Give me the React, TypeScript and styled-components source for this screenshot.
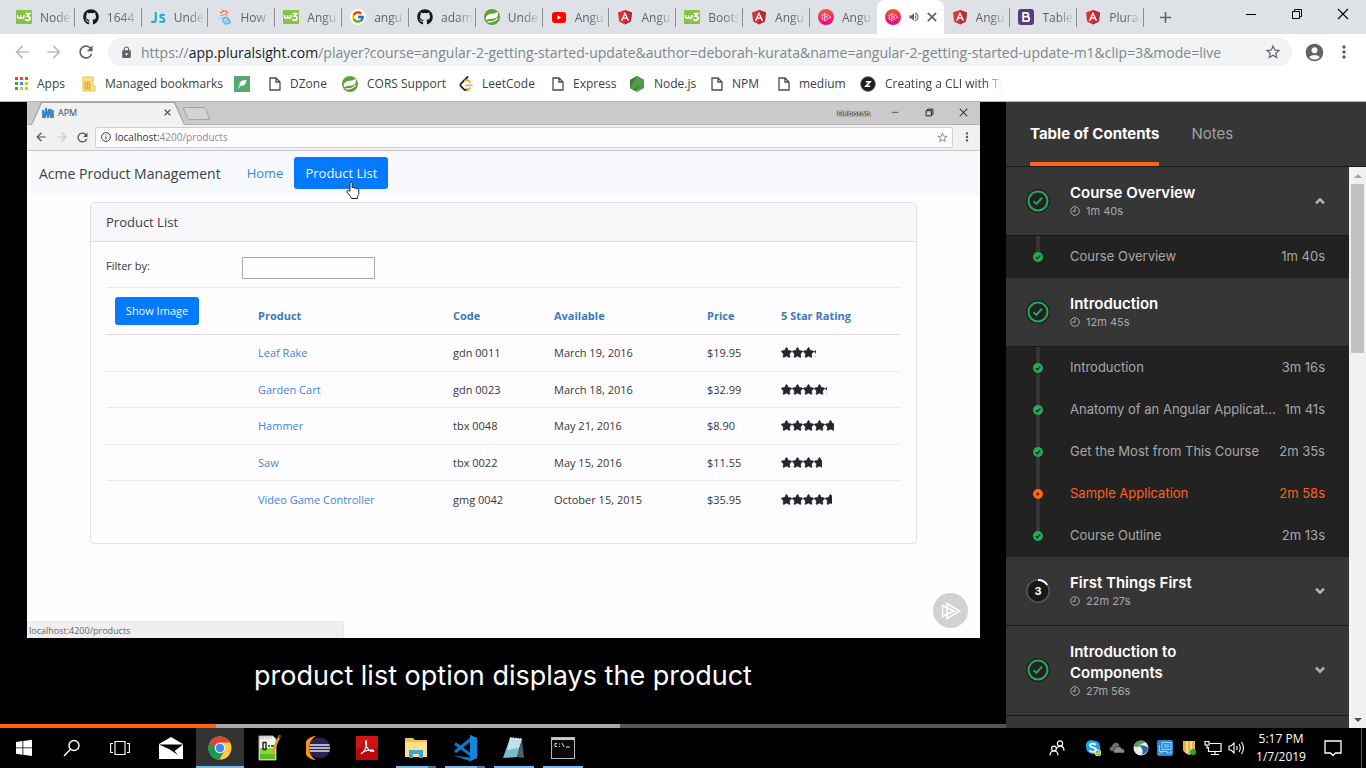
import React from 'react';
import styled, { createGlobalStyle, css } from 'styled-components';
import { FaGithub, FaStar, FaWindows } from 'react-icons/fa';
import { FcGoogle } from 'react-icons/fc';
import {
  MdAccountCircle,
  MdAdd,
  MdArrowBack,
  MdArrowForward,
  MdLock,
  MdMoreVert,
  MdRefresh,
  MdStarBorder,
  MdVolumeUp,
} from 'react-icons/md';

const UI = '"Open Sans", "Noto Sans", sans-serif';
const BRAND = 'Inter, "Open Sans", sans-serif';

const GlobalStyle = createGlobalStyle`
  *, *::before, *::after { box-sizing: border-box; }
  body { margin: 0; font-family: ${UI}; }
  button { margin: 0; padding: 0; border: 0; background: none; font: inherit; color: inherit; cursor: pointer; }
  a { color: inherit; text-decoration: none; }
  svg { display: block; flex: none; }
`;

const Desktop = styled.div`
  display: flex;
  flex-direction: column;
  height: 100vh;
  background: #000;
  overflow: hidden;
`;

/* ---------- Icons ---------- */

const W3Icon = () => (
  <svg width="16" height="16" viewBox="0 0 16 16">
    <rect y="1" width="16" height="14" rx="1" fill="#84c441" />
    <path d="M1.500 6v1.600a1.600 1.600 0 0 0 3.200 0V6.400M4.700 6.400v1.200a1.600 1.600 0 0 0 3.200 0V6" stroke="#fff" strokeWidth="1.500" fill="none" />
    <path d="M9.600 4.600h4l-2.200 2.600c3.600 0 3.200 4.200.2 4.200-1.200 0-1.900-.4-2.400-1.100" stroke="#fff" strokeWidth="1.800" fill="none" />
  </svg>
);

const JsIcon = () => (
  <svg width="16" height="16" viewBox="0 0 16 16" fill="none" stroke="#19a9c9" strokeWidth="2">
    <path d="M5.800 3v7.400q0 2.600-2.400 2.600-1.200 0-2.200-.6" />
    <path d="M14.800 6.300q-1.400-.6-2.600-.6-1.900 0-1.900 1.500 0 1 1.800 1.700 2.400.8 2.400 2.200 0 1.900-2.400 1.900-1.500 0-2.700-.6" />
  </svg>
);

const ClownIcon = () => (
  <svg width="16" height="16" viewBox="0 0 16 16">
    <path d="M1 10q2-3 5-3l5 1q4 2 4 7l-6 1q-3-1-4-4z" fill="#b9e0f5" />
    <path d="M6 9l4-2q4 2 5 7l-5 2q-4-3-4-7z" fill="#64b9e6" />
    <path d="M8 10l2 4M10 9l2 5" stroke="#d8effa" />
    <circle cx="8" cy="5.500" r="2.400" fill="#f9e3d8" />
    <path d="M4 3l2 1M6.500 1l1 2M10 1L9 3M12.500 3L10 4M5 6l1.500.5M9.500 6l1.500-.5M7.500 5.500h1" stroke="#e2543a" strokeWidth="1.300" />
  </svg>
);

const SpringIcon = () => (
  <svg width="16" height="16" viewBox="0 0 16 16">
    <circle cx="8" cy="8" r="8" fill="#5fa134" />
    <path d="M13.800 2.500c.8 4.500-1 7-4.800 7.300-2.500.2-5 .1-7 1.400C1 7.500 3.800 5 7.500 4.800c2.800-.2 4.800-.5 6.300-2.300z" fill="#fff" />
    <path d="M3.500 12.600c4.500.8 8-.4 10.200-3.600" fill="none" stroke="#fff" strokeWidth="1.300" />
  </svg>
);

const GoogleIcon = styled(FcGoogle).attrs({ size: 16 })`
  padding: 1px;
  border-radius: 50%;
  background: #fff;
`;

const YouTubeIcon = () => (
  <svg width="16" height="16" viewBox="0 0 16 16">
    <rect x="1" y="3" width="14" height="11" rx="3" fill="#f00" />
    <path d="M6.500 6.200v4.600l3.800-2.300z" fill="#fff" />
  </svg>
);

const AngularIcon = () => (
  <svg width="16" height="16" viewBox="0 0 16 16">
    <path d="M8 1l7 2.400-1.100 9L8 15.500l-5.900-3.100L1 3.400z" fill="#dd3139" />
    <path d="M8 1l7 2.400-1.100 9L8 15.500z" fill="#b52e31" />
    <path d="M8 2.800L3.800 11.800h1.600l.9-2h3.400l.9 2h1.600zm0 3l1.200 2.800H6.800z" fill="#fff" fillRule="evenodd" />
  </svg>
);

const PlayMark = ({ size, stroke, width = 1.2 }: { size: number; stroke: string; width?: number }) => (
  <svg width={size} height={size} viewBox="0 0 20 20" fill="none" stroke={stroke} strokeWidth={width}>
    <path d="M6 2.500L18.500 10 6 17.500z" />
    <path d="M1.500 4.500v11L13 10z" />
  </svg>
);

const PluralsightIcon = () => (
  <svg width="16" height="16" viewBox="0 0 16 16">
    <defs>
      <linearGradient id="ps" x1="0" y1="0" x2="0" y2="1">
        <stop offset="0" stopColor="#f15b2a" />
        <stop offset="1" stopColor="#ec008c" />
      </linearGradient>
    </defs>
    <circle cx="8" cy="8" r="8" fill="url(#ps)" />
    <path d="M6.500 4l6.500 4-6.500 4zM4.200 5.200v5.600L9.500 8z" fill="none" stroke="#ffc4dc" strokeWidth=".9" />
  </svg>
);

const BootstrapIcon = () => (
  <svg width="16" height="16" viewBox="0 0 16 16">
    <rect width="16" height="16" rx="3" fill="#563d7c" />
    <path d="M5.200 3.800h3.200c2.800 0 2.800 3.800 0 3.800H5.200zM5.200 7.600h3.600c3.200 0 3.200 4.600 0 4.600H5.200z" fill="none" stroke="#fff" strokeWidth="1.800" />
  </svg>
);

const AppsIcon = () => (
  <svg width="14" height="14" viewBox="0 0 14 14">
    {['#ea4335', '#ea4335', '#ea4335', '#34a853', '#4285f4', '#fbbc04', '#34a853', '#fbbc04', '#fbbc04'].map((c, i) => (
      <rect key={i} x={(i % 3) * 5 + 1} y={Math.floor(i / 3) * 5} width="3" height="3" fill={c} />
    ))}
  </svg>
);

const ManagedIcon = () => (
  <svg width="14" height="16" viewBox="0 0 14 16">
    <path d="M1 1h10v9h2v5H1z" fill="#fbe08a" stroke="#e8c14b" />
    <path d="M3 6h5v7H3zM3 8.500h5M3 11h5M5.500 6v7" fill="none" stroke="#d9a72c" />
  </svg>
);

const LeafIcon = () => (
  <svg width="16" height="16" viewBox="0 0 16 16">
    <rect width="16" height="16" fill="#53a970" />
    <path d="M12.500 4c-4 0-7 1.500-7 4 0 .8.200 1.400.6 1.900C9 10.200 12 9 12.500 4z" fill="#fff" />
    <path d="M4 12.500l3-4" stroke="#fff" strokeWidth="1" />
  </svg>
);

const PageIcon = () => (
  <svg width="12" height="14" viewBox="0 0 12 14" fill="none" stroke="#4a4d51" strokeWidth="1.300">
    <path d="M1 1h6l4 4v8H1zM7 1v4h4" />
  </svg>
);

const LeetCodeIcon = () => (
  <svg width="14" height="16" viewBox="0 0 14 16" fill="none" strokeWidth="1.800" strokeLinecap="round">
    <path d="M8.500 1L2 7.700q-1.200 1.300 0 2.600l3 3q1.500 1.500 3 0" stroke="#222" />
    <path d="M6 4.500q2-1.300 3.500.2l1.500 1.500M8 13.500q1 1.500 3-1.500" stroke="#f7a41d" />
    <path d="M7 9.300h6" stroke="#b3b3b3" />
  </svg>
);

const NodeIcon = () => (
  <svg width="16" height="16" viewBox="0 0 16 16">
    <path d="M8 0l7 4v8l-7 4-7-4V4z" fill="#4f9a4a" />
    <path d="M8 0l7 4-9 11-5-3V4z" fill="#3f7f3d" />
    <path d="M8 0l7 4v2L4 13.500 1 12z" fill="#66ad55" opacity=".6" />
  </svg>
);

const ZIcon = () => (
  <svg width="16" height="16" viewBox="0 0 16 16">
    <circle cx="8" cy="8" r="7.500" fill="#1e1e22" stroke="#8d8d8d" />
    <path d="M5.800 5.800h4.400l-4.400 4.400h4.400" fill="none" stroke="#fff" strokeWidth="1.500" />
  </svg>
);

const RestoreIcon = ({ size = 12 }: { size?: number }) => (
  <svg width={size} height={size} viewBox="0 0 12 12" fill="none" stroke="currentColor" strokeWidth={12 / size}>
    <path d="M1.500 3.500h7v7h-7zM3.500 3.500v-2h7v7h-2" />
  </svg>
);

const CrossIcon = ({ size = 12, weight = 1.1 }: { size?: number; weight?: number }) => (
  <svg width={size} height={size} viewBox="0 0 12 12" fill="none" stroke="currentColor" strokeWidth={weight}>
    <path d="M1 1l10 10M11 1L1 11" />
  </svg>
);

const DashIcon = ({ size = 12 }: { size?: number }) => (
  <svg width={size} height={size} viewBox="0 0 12 12" stroke="currentColor">
    <path d="M1 6.500h10" />
  </svg>
);

/* ---------- Browser chrome ---------- */

const TabStrip = styled.header`
  display: flex;
  flex: none;
  height: 34px;
  padding-left: 8px;
  background: #dee1e6;
`;

const TabList = styled.div`
  display: flex;
  flex: 0 1 1136px;
  min-width: 0;
`;

const Tab = styled.button<{ $active?: boolean; $beforeActive?: boolean }>`
  display: flex;
  flex: 1 1 0;
  align-items: center;
  min-width: 0;
  padding: 0 3px 0 8px;
  color: #5f6368;
  font-size: 12px;
  text-align: left;
  position: relative;
  ${(p) =>
    p.$active
      ? css`
          gap: 7px;
          background: #fff;
          border-radius: 8px 8px 0 0;
        `
      : css`
          gap: 8px;
          &::after {
            content: '';
            position: absolute;
            right: 0;
            top: 8px;
            width: 1px;
            height: 19px;
            background: ${p.$beforeActive ? 'transparent' : '#8b8e93'};
          }
        `}
`;

const TabTitle = styled.span`
  flex: 1;
  min-width: 0;
  overflow: hidden;
  white-space: nowrap;
  mask-image: linear-gradient(to right, #000 calc(100% - 16px), transparent);
`;

const NewTab = styled.button`
  display: grid;
  place-items: center;
  width: 42px;
  color: #5f6368;
`;

const WindowControls = styled.div`
  display: flex;
  height: 28px;
  margin-left: auto;
`;

const WindowButton = styled.button`
  display: grid;
  place-items: center;
  width: 46px;
  color: #000;
`;

const Toolbar = styled.div`
  display: flex;
  flex: none;
  align-items: center;
  height: 36px;
  padding: 0 6px;
  background: #fff;
`;

const ToolButton = styled.button<{ $dim?: boolean; $narrow?: boolean }>`
  display: grid;
  place-items: center;
  width: ${(p) => (p.$narrow ? '28px' : '32px')};
  height: 28px;
  color: ${(p) => (p.$dim ? '#babcbe' : '#5f6368')};
`;

const Omnibox = styled.form`
  display: flex;
  flex: 1;
  align-items: center;
  height: 28px;
  margin: 0 8px 0 6px;
  padding: 0 10px 0 12px;
  border-radius: 14px;
  background: #f1f3f4;
  color: #5f6368;
`;

const Url = styled.div`
  flex: 1;
  min-width: 0;
  margin-left: 8px;
  overflow: hidden;
  white-space: nowrap;
  font-size: 14px;
  color: #80868b;

  strong {
    color: #202124;
    font-weight: 400;
  }
`;

const Bookmarks = styled.nav`
  display: flex;
  flex: none;
  align-items: center;
  height: 32px;
  padding: 0 14px 4px;
  border-bottom: 1px solid #b6b4b6;
  background: #fff;
`;

const Bookmark = styled.a<{ $width: number; $fade?: boolean }>`
  display: flex;
  align-items: center;
  gap: 9px;
  width: ${(p) => p.$width}px;
  color: #3c4043;
  font-size: 12px;
  white-space: nowrap;
  ${(p) =>
    p.$fade &&
    css`
      overflow: hidden;
      mask-image: linear-gradient(to right, #000 calc(100% - 16px), transparent);
    `}
`;

/* ---------- Player ---------- */

const Main = styled.main`
  display: flex;
  flex: 1;
  min-height: 0;
`;

const Player = styled.section`
  display: flex;
  flex: 1;
  flex-direction: column;
  min-width: 0;
`;

const Video = styled.div`
  display: flex;
  flex-direction: column;
  flex: 1;
  min-height: 0;
  margin: 0 26px 0 27px;
  background: #fffdff;
  position: relative;
  overflow: hidden;
`;

const Caption = styled.p`
  flex: none;
  height: 86px;
  margin: 0;
  padding-top: 20px;
  color: #fff;
  font-family: ${BRAND};
  font-size: 27px;
  line-height: 36px;
  text-align: center;
`;

const Progress = styled.div`
  display: flex;
  flex: none;
  height: 4px;
  background: #555;
`;

const ProgressPart = styled.div<{ $kind: 'played' | 'buffered' }>`
  background: ${(p) => (p.$kind === 'played' ? '#ff6314' : '#a8a8a8')};
`;

const InnerStrip = styled.div`
  display: flex;
  flex: none;
  height: 23px;
  padding-left: 4px;
  border-bottom: 1px solid #b3b1b3;
  background: #cbc9cb;
`;

const InnerTab = styled.div`
  display: flex;
  align-items: center;
  width: 154px;
  height: 23px;
  padding: 0 14px 2px 11px;
  background: #a19fa1;
  clip-path: polygon(10px 0, 144px 0, 100% 100%, 0 100%);
  color: #444;
  font-size: 9px;
  position: relative;

  &::before {
    content: '';
    position: absolute;
    inset: 1px 1px 0;
    background: #f2f1f2;
    clip-path: polygon(10px 0, 142px 0, 100% 100%, 0 100%);
  }

  > * {
    position: relative;
  }

  button {
    margin-left: auto;
  }
`;

const InnerTabTitle = styled.span`
  margin-left: 4px;
`;

const InnerNewTab = styled.button`
  width: 23px;
  height: 13px;
  margin: 5px 0 0;
  border: 1px solid #a5a3a5;
  border-radius: 2px;
  background: #d4d2d4;
  transform: skewX(22deg);
`;

const InnerControls = styled.div`
  display: flex;
  align-items: center;
  margin-left: auto;
  padding-bottom: 2px;
  color: #222;

  button {
    display: grid;
    place-items: center;
    width: 34px;
    height: 20px;
  }
`;

const Owner = styled.span`
  margin-right: 8px;
  color: #f5f5f5;
  font-size: 8px;
  text-shadow: 0 0 1px #222, 0 0 1px #222, 1px 0 1px #444, -1px 0 1px #444;
`;

const InnerToolbar = styled.div`
  display: flex;
  flex: none;
  align-items: center;
  height: 26px;
  padding: 0 3px 1px;
  border-bottom: 1px solid #c9c2c7;
  background: #f2f1f2;
  color: #555;
`;

const InnerTool = styled.button<{ $dim?: boolean }>`
  display: grid;
  place-items: center;
  width: 21px;
  height: 20px;
  opacity: ${(p) => (p.$dim ? 0.25 : 1)};
`;

const InnerUrl = styled.div`
  display: flex;
  flex: 1;
  align-items: center;
  gap: 4px;
  height: 21px;
  margin: 0 3px 0 2px;
  padding: 0 3px 0 5px;
  border: 1px solid #cfcdcf;
  border-radius: 2px;
  background: #fffdff;
  color: #8b8b8b;
  font-size: 10px;

  b {
    color: #333;
    font-weight: 400;
  }

  span {
    flex: 1;
  }
`;

const AppNav = styled.nav`
  display: flex;
  flex: none;
  align-items: center;
  height: 44px;
  padding-left: 12px;
  background: #f7f9fd;
  color: #3c4046;
  font-size: 13px;
`;

const AppBrand = styled.a`
  margin-right: 15px;
  font-size: 14px;
`;

const AppLink = styled.a<{ $active?: boolean }>`
  display: flex;
  align-items: center;
  height: 32px;
  margin-bottom: 1px;
  padding: 0 11px;
  border-radius: 3px;
  background: ${(p) => (p.$active ? '#057aff' : 'transparent')};
  color: ${(p) => (p.$active ? '#f2f8ff' : '#3a85e0')};
  position: relative;
`;

const Pointer = styled.svg`
  position: absolute;
  left: 51px;
  top: 24px;
`;

const Card = styled.section`
  flex: none;
  margin: 7px 63px 0;
  border: 1px solid #e2e1e6;
  border-radius: 4px;
`;

const CardHeader = styled.h1`
  margin: 0;
  padding: 0 15px;
  border-bottom: 1px solid #dddce1;
  background: #f7f6f9;
  color: #3c4046;
  font-size: 13px;
  font-weight: 400;
  line-height: 38px;
`;

const CardBody = styled.div`
  padding: 15px 15px 26px;
  color: #33373c;
  font-size: 11px;
`;

const FilterRow = styled.div`
  display: grid;
  grid-template-columns: 136px 133px;
  align-items: center;
  margin-bottom: 8px;

  label {
    padding-bottom: 6px;
  }

  input {
    width: 100%;
    height: 22px;
    border: 1px solid #aaa9ad;
    background: #fffdff;
  }
`;

const Products = styled.table`
  width: 100%;
  height: 230px;
  border-collapse: separate;
  border-spacing: 0;
  table-layout: fixed;

  th,
  td {
    padding: 0 9px;
    border-top: 1px solid #e9ebef;
    text-align: left;
    white-space: nowrap;
  }

  thead tr {
    height: 47px;
  }

  th {
    padding: 9px;
    vertical-align: bottom;
    color: #3a7ab8;
    line-height: 18px;
  }

  th:first-child {
    padding-bottom: 0;
    vertical-align: top;
  }

  tbody tr:first-child td {
    border-top-color: #dddce2;
  }

  td a {
    color: #3a85e0;
  }
`;

const ShowImage = styled.button`
  display: block;
  width: 84px;
  height: 28px;
  border-radius: 3px;
  background: #057aff;
  color: #f2f8ff;
  font-weight: 400;
`;

const Stars = styled.div`
  display: flex;
  overflow: hidden;
  color: #24272c;

  path {
    stroke: currentColor;
    stroke-width: 36px;
  }
`;

const StatusBubble = styled.div`
  position: absolute;
  left: 0;
  bottom: 0;
  width: 317px;
  height: 17px;
  padding-left: 2px;
  border: 1px solid #e8e7e9;
  border-width: 1px 1px 0 0;
  border-radius: 0 3px 0 0;
  background: #efeff0;
  color: #666;
  font-size: 9px;
  line-height: 17px;
`;

const Watermark = styled.div`
  position: absolute;
  right: 12px;
  bottom: 10px;
  display: grid;
  place-items: center;
  width: 35px;
  height: 35px;
  border-radius: 50%;
  background: #d2d1d3;
`;

/* ---------- Course sidebar ---------- */

const Sidebar = styled.aside`
  display: flex;
  flex: none;
  flex-direction: column;
  width: 360px;
  background: #363636;
  font-family: ${BRAND};
`;

const SideTabs = styled.div`
  display: flex;
  flex: none;
  gap: 32px;
  height: 65px;
  padding: 0 24px;
  border-bottom: 1px solid #181818;
`;

const SideTab = styled.button<{ $active?: boolean }>`
  padding-top: 2px;
  border-bottom: 4px solid ${(p) => (p.$active ? '#ff6314' : 'transparent')};
  color: ${(p) => (p.$active ? '#fff' : '#a0a0a0')};
  font-size: 15px;
  font-weight: ${(p) => (p.$active ? 700 : 400)};
`;

const SideScroll = styled.div`
  display: flex;
  flex: 1;
  min-height: 0;
`;

const ModuleList = styled.div`
  flex: 1;
  min-width: 0;
  overflow: hidden;
`;

const ModuleHeader = styled.button`
  display: grid;
  grid-template-columns: 24px 1fr 10px;
  column-gap: 20px;
  align-items: center;
  width: 100%;
  padding: 15px 24px 16px 20px;
  border-bottom: 1px solid #181818;
  color: #fff;
  text-align: left;
`;

const ModuleText = styled.span`
  display: block;
  max-width: 160px;
`;

const ModuleTitle = styled.span`
  display: block;
  font-size: 15px;
  font-weight: 600;
  line-height: 21px;
`;

const ModuleMeta = styled.span`
  display: flex;
  align-items: center;
  gap: 6px;
  color: #aaa;
  font-size: 11px;
  line-height: 16px;
`;

const ClipList = styled.ul`
  margin: 0;
  padding: 0;
  list-style: none;
  background: #222;
`;

const Rail = styled.span<{ $last?: boolean }>`
  display: flex;
  align-items: center;
  justify-content: center;
  align-self: stretch;
  background: linear-gradient(#363636, #363636) center top / 4px ${(p) => (p.$last ? '50%' : '100%')} no-repeat;
`;

const Clip = styled.a<{ $current?: boolean }>`
  display: grid;
  grid-template-columns: 24px 1fr auto;
  align-items: center;
  height: 42px;
  padding: 0 24px 0 20px;
  color: ${(p) => (p.$current ? '#ff6314' : '#a8a8a8')};
  font-size: 13px;
  line-height: 18px;
  white-space: nowrap;
`;

const ClipTitle = styled.span`
  margin: 0 6px 0 20px;
  padding-bottom: 2px;
  overflow: hidden;
  text-overflow: ellipsis;
`;

const ClipTime = styled.span`
  padding-bottom: 2px;
`;

const ScrollTrack = styled.div`
  display: flex;
  flex-direction: column;
  align-items: center;
  justify-content: space-between;
  width: 17px;
  background: #f1f1f1;
`;

const ScrollArrow = styled.button<{ $down?: boolean }>`
  width: 17px;
  height: 17px;
  color: ${(p) => (p.$down ? '#505050' : '#a3a3a3')};
  display: grid;
  place-items: center;
`;

const ScrollThumb = styled.div`
  width: 13px;
  height: 169px;
  margin-bottom: auto;
  background: #c1c1c1;
`;

const DoneBadge = () => (
  <svg width="24" height="24" viewBox="0 0 24 24" fill="none">
    <circle cx="12" cy="12" r="12" fill="#222" />
    <circle cx="12" cy="12" r="9.500" stroke="#22ac58" strokeWidth="2" />
    <path d="M7.500 12.200l3 2.700 5.500-6.200" stroke="#22ac58" strokeWidth="2" />
  </svg>
);

const NumberBadge = () => (
  <svg width="24" height="24" viewBox="0 0 24 24" fill="none">
    <circle cx="12" cy="12" r="11.200" fill="#181818" stroke="#555" strokeWidth="1.600" />
    <path d="M12 1a11 11 0 0 1 9.200 5" stroke="#fff" strokeWidth="1.800" />
    <text x="12" y="16" textAnchor="middle" fill="#fff" fontSize="11" fontWeight="700">3</text>
  </svg>
);

const ClockIcon = () => (
  <svg width="10" height="10" viewBox="0 0 10 10" fill="none" stroke="#aaa">
    <circle cx="5" cy="5" r="4.300" />
    <path d="M5 2v3.300H2.500" />
  </svg>
);

const Chevron = ({ up }: { up?: boolean }) => (
  <svg width="10" height="8" viewBox="0 0 10 8" fill="none" stroke="#b0b0b0" strokeWidth="2.600">
    <path d={up ? 'M1 6.300l4-4 4 4' : 'M1 1.700l4 4 4-4'} />
  </svg>
);

const ClipDone = () => (
  <svg width="10" height="10" viewBox="0 0 10 10" fill="none">
    <circle cx="5" cy="5" r="5" fill="#22ac58" />
    <path d="M2.700 5.200l1.600 1.500 3-3.300" stroke="#222" strokeWidth="1.300" />
  </svg>
);

const ClipPlaying = () => (
  <svg width="10" height="10" viewBox="0 0 10 10">
    <circle cx="5" cy="5" r="5" fill="#ff6314" />
    <path d="M3.800 3v4l3-2z" fill="#222" />
  </svg>
);

/* ---------- Taskbar ---------- */

const Taskbar = styled.footer`
  display: flex;
  flex: none;
  height: 40px;
  background: #000;
  color: #fff;
`;

const TaskGroup = styled.div<{ $gap: number; $start?: number }>`
  display: flex;
  gap: ${(p) => p.$gap}px;
  margin-left: ${(p) => p.$start ?? 0}px;
`;

const TaskButton = styled.button<{ $active?: boolean; $open?: boolean; $stacked?: boolean }>`
  display: grid;
  place-items: center;
  width: 48px;
  height: 40px;
  position: relative;
  background: ${(p) => (p.$active ? '#333' : 'transparent')};

  &::after {
    content: '';
    position: absolute;
    bottom: 0;
    left: ${(p) => (p.$active ? 0 : 4)}px;
    right: ${(p) => (p.$active ? 0 : 4)}px;
    height: 2px;
    background: ${(p) =>
      p.$stacked
        ? 'linear-gradient(to right, #76b9ed 32px, #4a7799 32px)'
        : p.$active || p.$open
          ? '#76b9ed'
          : 'transparent'};
  }
`;

const Tray = styled.div`
  display: flex;
  align-items: center;
  margin-left: auto;
  padding-right: 4px;
`;

const TrayButton = styled.button<{ $width?: number }>`
  display: grid;
  place-items: center;
  width: ${(p) => p.$width ?? 24}px;
  height: 40px;
`;

const Clock = styled.time`
  width: 64px;
  font-size: 12px;
  line-height: 18px;
  text-align: center;
  white-space: pre-line;
`;

const ShowDesktop = styled.button`
  width: 1px;
  height: 40px;
  margin-left: 8px;
  background: #555;
`;

const StartIcon = () => (
  <svg width="16" height="18" viewBox="0 0 16 18" fill="#fff">
    <path d="M0 3l6.500-.9v6.400H0zM7.300 2L16 .8v7.700H7.300zM0 9.300h6.500v6.400L0 14.800zM7.300 9.300H16V17l-8.700-1.200z" />
  </svg>
);

const SearchIcon = () => (
  <svg width="18" height="18" viewBox="0 0 18 18" fill="none" stroke="#fff" strokeWidth="1.400">
    <circle cx="11" cy="6.500" r="5" />
    <path d="M7.500 10.200L1 17" />
  </svg>
);

const TaskViewIcon = () => (
  <svg width="20" height="16" viewBox="0 0 20 16" fill="none" stroke="#fff" strokeWidth="1.100">
    <path d="M5 1.500h10v13H5zM3 3.500H.6v9H3M17 3.500h2.400v9H17" />
  </svg>
);

const MailIcon = () => (
  <svg width="24" height="22" viewBox="0 0 24 22">
    <path d="M0 7l12-7 12 7v15H0z" fill="#fff" />
    <path d="M0 7.500h24L15.500 14l3.500 4-9-6z" fill="#000" />
  </svg>
);

const ChromeIcon = () => (
  <svg width="24" height="24" viewBox="0 0 24 24">
    <circle cx="12" cy="12" r="11.500" fill="#ffcd40" />
    <path d="M12 12L2 6.300A11.500 11.500 0 0 0 11.500 23.500l5-9z" fill="#0f9d58" />
    <path d="M2 6.300A11.500 11.500 0 0 1 22 6.500H12A5.500 5.500 0 0 0 7.200 15z" fill="#db4437" />
    <circle cx="12" cy="12" r="5.300" fill="#f1f1f1" />
    <circle cx="12" cy="12" r="4.200" fill="#4285f4" />
  </svg>
);

const NotepadPlusIcon = () => (
  <svg width="24" height="26" viewBox="0 0 24 26">
    <path d="M2 1h14l3 3v21H2z" fill="#f4f4ee" stroke="#aaa" />
    <path d="M3 13h15v11H3z" fill="#8ada3e" />
    <path d="M3 19h15v5H3z" fill="#5cb823" />
    <path d="M3 3h12" stroke="#999" strokeDasharray="1.500 1" />
    <path d="M6 7v8M6 7.500h3v7H6M11 11h2M14 11h3" stroke="#222" strokeWidth="1.400" fill="none" />
    <path d="M22.500 1L16 16l-1 4" stroke="#e0a030" strokeWidth="2.400" fill="none" />
    <path d="M23 0l-1.300 3" stroke="#a33" strokeWidth="2.400" />
  </svg>
);

const EclipseIcon = () => (
  <svg width="24" height="24" viewBox="0 0 24 24">
    <path d="M10 0A12 12 0 0 0 10 24A14 14 0 0 1 10 0z" fill="#f7941e" />
    <circle cx="13.500" cy="12" r="10.500" fill="#2c2255" />
    <path d="M3.500 9h20M3 12h21M3.500 15h20" stroke="#e6e4f0" strokeWidth="1.700" />
  </svg>
);

const AcrobatIcon = () => (
  <svg width="22" height="24" viewBox="0 0 22 24">
    <rect width="22" height="24" fill="#b80a0c" />
    <rect width="22" height="12" fill="#cf1416" />
    <path d="M5 18c4-3 6-8 5.500-12.500-.3-1.500-1.700 0-.7 3C11 13 14 15.500 17.500 15.500c1.500-1-2-2.500-7-.7C8 15.700 5.500 17 5 18z" fill="none" stroke="#fff" strokeWidth="1.100" />
  </svg>
);

const ExplorerIcon = () => (
  <svg width="24" height="22" viewBox="0 0 24 22">
    <path d="M1 1h8l2 2h12v17H1z" fill="#f0c24f" />
    <path d="M1 5h22v15H1z" fill="#fde08a" />
    <path d="M5 21v-8h14v8h-4v-4H9v4z" fill="#37a6e0" />
  </svg>
);

const CodeIcon = () => (
  <svg width="24" height="26" viewBox="0 0 24 26">
    <path d="M17 0l7 3v20l-7 3L0 20.500l17 2z" fill="#0b78cc" />
    <path d="M2 8.500L18 20M2 17L18 4" stroke="#0b78cc" strokeWidth="3" />
    <path d="M17 0l7 3v20l-7 3z" fill="#1187de" />
  </svg>
);

const NotepadIcon = () => (
  <svg width="24" height="24" viewBox="0 0 24 24">
    <path d="M8 2l12 1-5 18-14 1z" fill="#79bccb" />
    <path d="M8 2l12 1-3 9-12 2z" fill="#bfe2ea" />
    <path d="M20 3l2 19-7-1z" fill="#4d6069" />
    <path d="M8 2l12 1.500" stroke="#eee" strokeWidth="2" strokeDasharray="1.500 1" />
  </svg>
);

const CmdIcon = () => (
  <svg width="24" height="22" viewBox="0 0 24 22">
    <rect x=".5" y=".5" width="23" height="21" fill="#0a0a0a" stroke="#b8b8b8" />
    <path d="M1 2h22" stroke="#ccc" strokeWidth="2" />
    <path d="M6 6.500H4v3h2M8.500 6.500v1M8.500 9v1M11 6l2 4M15 10h4" stroke="#ddd" fill="none" />
  </svg>
);

const PeopleIcon = () => (
  <svg width="16" height="16" viewBox="0 0 16 16" fill="none" stroke="#fff" strokeWidth="1.200">
    <circle cx="5" cy="8.500" r="2.400" />
    <path d="M1 15.500q0-4.500 4-4.500t4 4.500" />
    <circle cx="11" cy="3.500" r="2.600" />
    <path d="M8.500 8q.8-1.800 2.500-1.800 4 0 4 4.500" />
  </svg>
);

const SkypeIcon = () => (
  <svg width="16" height="16" viewBox="0 0 16 16">
    <path d="M4 .5q2-1 4 0 7.500 0 7 7 1 3-1 5.500-2 2-5 1-8 0-8-7.500Q0 2.500 4 .5z" fill="#12a5f4" />
    <path d="M10.800 5Q9.800 3.500 7.800 3.500 5 3.500 5 5.300q0 1.500 2.800 2 3.200.6 3.200 2.500Q11 11.800 8 11.800q-2.700 0-3.300-1.900" fill="none" stroke="#fff" strokeWidth="1.800" />
    <circle cx="13" cy="13" r="3" fill="#7fba00" stroke="#fff" strokeWidth=".8" />
    <path d="M11.600 13l1 1 1.800-1.900" fill="none" stroke="#fff" />
  </svg>
);

const CloudIcon = () => (
  <svg width="16" height="12" viewBox="0 0 16 12">
    <path d="M1 8q-1-3 2-3.500Q4 0 8 1q2 .4 2.500 2.500L6 9H2z" fill="#6d6d6d" />
    <path d="M5 11q-2-2 .6-4Q7 3.500 10 4.500q2 0 2.500 2 3.500 0 3 4l-1 .5z" fill="#8c8c8c" stroke="#000" strokeWidth=".5" />
  </svg>
);

const SwirlIcon = () => (
  <svg width="16" height="16" viewBox="0 0 16 16">
    <circle cx="8" cy="8" r="7.500" fill="#e3e9ec" />
    <path d="M.8 6a7.500 7.500 0 0 1 12-3.500Q8 3 6 6 4 8 .8 6z" fill="#5a9f52" />
    <path d="M6 6q5-2 9.500 2-1 5-6.500 7 1-3 .5-5Q9 7.500 6 6z" fill="#2f6aa5" />
    <circle cx="7" cy="9.500" r="2" fill="#fff" />
  </svg>
);

const PanelIcon = () => (
  <svg width="16" height="16" viewBox="0 0 16 16">
    <rect width="16" height="16" rx="2" fill="#2589dc" />
    <path d="M5 2.500h9v7H5zM7 5h5M7 7h5M2.500 5v6.500h8M9 13h5v-2" fill="none" stroke="#a9d3f5" />
    <path d="M2 14l4-2" stroke="#f2b04b" />
  </svg>
);

const ShieldIcon = () => (
  <svg width="16" height="16" viewBox="0 0 16 16">
    <path d="M2 1h12v9q-1 3-6 5-5-2-6-5z" fill="#eab440" />
    <path d="M6 1v12M10 1v13" stroke="#fff0b8" strokeWidth="1.300" />
    <circle cx="12" cy="12" r="3" fill="#1fae3b" />
  </svg>
);

const NetworkIcon = () => (
  <svg width="18" height="16" viewBox="0 0 18 16" fill="none" stroke="#fff" strokeWidth="1.200">
    <path d="M6 3.500h11v8H4.500V7M11 11.500v3M7 14.500h8M1 1.500h4v3.500H1zM3 5v3h2" />
  </svg>
);

const VolumeIcon = () => (
  <svg width="18" height="14" viewBox="0 0 18 14" fill="none" stroke="#fff" strokeWidth="1.100">
    <path d="M1 5h2l3-3v10L3 9H1zM8.500 5q1.300 2 0 4M11 3q2.600 4 0 8M13.500 1q4 6 0 12" />
  </svg>
);

const NoticeIcon = () => (
  <svg width="18" height="18" viewBox="0 0 18 18" fill="none" stroke="#fff" strokeWidth="1.300">
    <path d="M1 2h16v12h-5.500L9 16.500 6.500 14H1z" />
  </svg>
);

/* ---------- Data ---------- */

const tabs: { icon: React.ReactNode; title: string }[] = [
  { icon: <W3Icon />, title: 'Node' },
  { icon: <FaGithub size={16} color="#15181c" />, title: '1644' },
  { icon: <JsIcon />, title: 'Unde' },
  { icon: <ClownIcon />, title: 'How' },
  { icon: <W3Icon />, title: 'Angu' },
  { icon: <GoogleIcon />, title: 'angu' },
  { icon: <FaGithub size={16} color="#15181c" />, title: 'adam' },
  { icon: <SpringIcon />, title: 'Unde' },
  { icon: <YouTubeIcon />, title: 'Angu' },
  { icon: <AngularIcon />, title: 'Angu' },
  { icon: <W3Icon />, title: 'Boots' },
  { icon: <AngularIcon />, title: 'Angu' },
  { icon: <PluralsightIcon />, title: 'Angu' },
  { icon: <PluralsightIcon />, title: '' },
  { icon: <AngularIcon />, title: 'Angu' },
  { icon: <BootstrapIcon />, title: 'Table' },
  { icon: <AngularIcon />, title: 'Plura' },
];

const bookmarks: { icon: React.ReactNode; label: string; width: number; fade?: boolean }[] = [
  { icon: <AppsIcon />, label: 'Apps', width: 68 },
  { icon: <ManagedIcon />, label: 'Managed bookmarks', width: 152 },
  { icon: <LeafIcon />, label: '', width: 35 },
  { icon: <PageIcon />, label: 'DZone', width: 73 },
  { icon: <SpringIcon />, label: 'CORS Support', width: 117 },
  { icon: <LeetCodeIcon />, label: 'LeetCode', width: 93 },
  { icon: <PageIcon />, label: 'Express', width: 77 },
  { icon: <NodeIcon />, label: 'Node.js', width: 82 },
  { icon: <PageIcon />, label: 'NPM', width: 67 },
  { icon: <PageIcon />, label: 'medium', width: 82 },
  { icon: <ZIcon />, label: 'Creating a CLI with Ty', width: 142, fade: true },
];

const products = [
  { name: 'Leaf Rake', code: 'gdn 0011', date: 'March 19, 2016', price: '$19.95', rating: 3.2 },
  { name: 'Garden Cart', code: 'gdn 0023', date: 'March 18, 2016', price: '$32.99', rating: 4.2 },
  { name: 'Hammer', code: 'tbx 0048', date: 'May 21, 2016', price: '$8.90', rating: 4.8 },
  { name: 'Saw', code: 'tbx 0022', date: 'May 15, 2016', price: '$11.55', rating: 3.7 },
  { name: 'Video Game Controller', code: 'gmg 0042', date: 'October 15, 2015', price: '$35.95', rating: 4.6 },
];

type Module = {
  title: string;
  time: string;
  badge: React.ReactNode;
  chevron?: 'up' | 'down';
  clips?: { title: string; time: string; current?: boolean }[];
};

const modules: Module[] = [
  {
    title: 'Course Overview',
    time: '1m 40s',
    badge: <DoneBadge />,
    chevron: 'up',
    clips: [{ title: 'Course Overview', time: '1m 40s' }],
  },
  {
    title: 'Introduction',
    time: '12m 45s',
    badge: <DoneBadge />,
    clips: [
      { title: 'Introduction', time: '3m 16s' },
      { title: 'Anatomy of an Angular Application', time: '1m 41s' },
      { title: 'Get the Most from This Course', time: '2m 35s' },
      { title: 'Sample Application', time: '2m 58s', current: true },
      { title: 'Course Outline', time: '2m 13s' },
    ],
  },
  { title: 'First Things First', time: '22m 27s', badge: <NumberBadge />, chevron: 'down' },
  { title: 'Introduction to Components', time: '27m 56s', badge: <DoneBadge />, chevron: 'down' },
];

/* ---------- Page ---------- */

const BrowserChrome = () => (
  <>
    <TabStrip>
      <TabList>
        {tabs.map((t, i) =>
          i === 13 ? (
            <Tab key={i} $active aria-label="Pluralsight player">
              {t.icon}
              <MdVolumeUp size={12} />
              <CrossIcon size={10} weight={2} />
            </Tab>
          ) : (
            <Tab key={i} $beforeActive={i === 12}>
              {t.icon}
              <TabTitle>{t.title}</TabTitle>
            </Tab>
          ),
        )}
      </TabList>
      <NewTab aria-label="New tab"><MdAdd size={19} /></NewTab>
      <WindowControls>
        <WindowButton aria-label="Minimize"><DashIcon /></WindowButton>
        <WindowButton aria-label="Restore"><RestoreIcon /></WindowButton>
        <WindowButton aria-label="Close"><CrossIcon /></WindowButton>
      </WindowControls>
    </TabStrip>
    <Toolbar>
      <ToolButton $dim aria-label="Back"><MdArrowBack size={20} /></ToolButton>
      <ToolButton $dim aria-label="Forward"><MdArrowForward size={20} /></ToolButton>
      <ToolButton aria-label="Reload"><MdRefresh size={20} /></ToolButton>
      <Omnibox onSubmit={(e) => e.preventDefault()}>
        <MdLock size={13} />
        <Url>
          https://<strong>app.pluralsight.com</strong>
          /player?course=angular-2-getting-started-update&amp;author=deborah-kurata&amp;name=angular-2-getting-started-update-m1&amp;clip=3&amp;mode=live
        </Url>
        <MdStarBorder size={18} />
      </Omnibox>
      <ToolButton aria-label="Profile" $narrow><MdAccountCircle size={21} /></ToolButton>
      <ToolButton aria-label="Menu"><MdMoreVert size={20} /></ToolButton>
    </Toolbar>
    <Bookmarks>
      {bookmarks.map((b, i) => (
        <Bookmark key={i} href="#" $width={b.width} $fade={b.fade}>
          {b.icon}
          {b.label}
        </Bookmark>
      ))}
    </Bookmarks>
  </>
);

const DemoApp = () => (
  <Video>
    <InnerStrip>
      <InnerTab>
        <svg width="12" height="12" viewBox="0 0 12 12" fill="none" stroke="#3d86bd" strokeWidth="1.800">
          <path d="M1 11V3l2 8 1-10 2 10 1-9 2 9V2M11 3v8M1 7h10" />
        </svg>
        <InnerTabTitle>APM</InnerTabTitle>
        <button aria-label="Close tab"><CrossIcon size={7} weight={2} /></button>
      </InnerTab>
      <InnerNewTab aria-label="New tab" />
      <InnerControls>
        <Owner>Deborah</Owner>
        <button aria-label="Minimize"><DashIcon size={8} /></button>
        <button aria-label="Restore"><RestoreIcon size={9} /></button>
        <button aria-label="Close"><CrossIcon size={9} weight={1.400} /></button>
      </InnerControls>
    </InnerStrip>
    <InnerToolbar>
      <InnerTool aria-label="Back"><MdArrowBack size={14} /></InnerTool>
      <InnerTool $dim aria-label="Forward"><MdArrowForward size={14} /></InnerTool>
      <InnerTool aria-label="Reload"><MdRefresh size={15} /></InnerTool>
      <InnerUrl>
        <svg width="10" height="10" viewBox="0 0 10 10" fill="none" stroke="#444">
          <circle cx="5" cy="5" r="4.400" />
          <path d="M5 4.300v3.200M5 2.400v1" />
        </svg>
        <span><b>localhost:</b>4200/products</span>
        <MdStarBorder size={13} />
      </InnerUrl>
      <InnerTool aria-label="Menu"><MdMoreVert size={14} /></InnerTool>
    </InnerToolbar>
    <AppNav>
      <AppBrand href="#">Acme Product Management</AppBrand>
      <AppLink href="#">Home</AppLink>
      <AppLink href="#" $active>
        Product List
        <Pointer width="16" height="19" viewBox="0 0 16 19">
          <path
            d="M5 10V2.200C5 .6 7.200.6 7.200 2.200V7c.3-1 2.200-.8 2.200.4.300-.9 2.200-.6 2.200.6.400-.7 2.200-.4 2.200.8v3.500c0 2-1.300 2.500-1.500 5.200H6.500C6 15 2.500 12.500 1.800 10.800c-.4-1.300 1.200-1.800 2-.8z"
            fill="#fff"
            stroke="#222"
          />
        </Pointer>
      </AppLink>
    </AppNav>
    <Card>
      <CardHeader>Product List</CardHeader>
      <CardBody>
        <FilterRow>
          <label htmlFor="filter">Filter by:</label>
          <input id="filter" type="text" />
        </FilterRow>
        <Products>
          <colgroup>
            <col width="143" />
            <col width="195" />
            <col width="101" />
            <col width="153" />
            <col width="74" />
            <col />
          </colgroup>
          <thead>
            <tr>
              <th><ShowImage>Show Image</ShowImage></th>
              <th>Product</th>
              <th>Code</th>
              <th>Available</th>
              <th>Price</th>
              <th>5 Star Rating</th>
            </tr>
          </thead>
          <tbody>
            {products.map((p) => (
              <tr key={p.name}>
                <td />
                <td><a href="#">{p.name}</a></td>
                <td>{p.code}</td>
                <td>{p.date}</td>
                <td>{p.price}</td>
                <td>
                  <Stars style={{ width: Math.round(p.rating * 11) }}>
                    {[0, 1, 2, 3, 4].map((s) => <FaStar key={s} size={11} />)}
                  </Stars>
                </td>
              </tr>
            ))}
          </tbody>
        </Products>
      </CardBody>
    </Card>
    <StatusBubble>localhost:4200/products</StatusBubble>
    <Watermark><PlayMark size={20} stroke="#fff" width={1.500} /></Watermark>
  </Video>
);

const CourseSidebar = () => (
  <Sidebar>
    <SideTabs>
      <SideTab $active>Table of Contents</SideTab>
      <SideTab>Notes</SideTab>
    </SideTabs>
    <SideScroll>
      <ModuleList>
        {modules.map((m) => (
          <section key={m.title}>
            <ModuleHeader>
              {m.badge}
              <ModuleText>
                <ModuleTitle>{m.title}</ModuleTitle>
                <ModuleMeta><ClockIcon />{m.time}</ModuleMeta>
              </ModuleText>
              {m.chevron && <Chevron up={m.chevron === 'up'} />}
            </ModuleHeader>
            {m.clips && (
              <ClipList>
                {m.clips.map((c, i) => (
                  <li key={c.title}>
                    <Clip href="#" $current={c.current}>
                      <Rail $last={i === m.clips!.length - 1}>{c.current ? <ClipPlaying /> : <ClipDone />}</Rail>
                      <ClipTitle>{c.title}</ClipTitle>
                      <ClipTime>{c.time}</ClipTime>
                    </Clip>
                  </li>
                ))}
              </ClipList>
            )}
          </section>
        ))}
      </ModuleList>
      <ScrollTrack>
        <ScrollArrow aria-label="Scroll up">
          <svg width="8" height="4" viewBox="0 0 8 4" fill="currentColor"><path d="M0 4l4-4 4 4z" /></svg>
        </ScrollArrow>
        <ScrollThumb />
        <ScrollArrow $down aria-label="Scroll down">
          <svg width="8" height="4" viewBox="0 0 8 4" fill="currentColor"><path d="M0 0l4 4 4-4z" /></svg>
        </ScrollArrow>
      </ScrollTrack>
    </SideScroll>
  </Sidebar>
);

const WindowsTaskbar = () => (
  <Taskbar>
    <TaskGroup $gap={0}>
      <TaskButton aria-label="Start"><StartIcon /></TaskButton>
      <TaskButton aria-label="Search"><SearchIcon /></TaskButton>
      <TaskButton aria-label="Task view"><TaskViewIcon /></TaskButton>
    </TaskGroup>
    <TaskGroup $gap={1} $start={3}>
      <TaskButton aria-label="Mail"><MailIcon /></TaskButton>
      <TaskButton aria-label="Chrome" $active><ChromeIcon /></TaskButton>
      <TaskButton aria-label="Notepad++"><NotepadPlusIcon /></TaskButton>
      <TaskButton aria-label="Eclipse"><EclipseIcon /></TaskButton>
      <TaskButton aria-label="Acrobat Reader"><AcrobatIcon /></TaskButton>
      <TaskButton aria-label="File Explorer" $open $stacked><ExplorerIcon /></TaskButton>
      <TaskButton aria-label="Visual Studio Code" $open $stacked><CodeIcon /></TaskButton>
      <TaskButton aria-label="Notepad" $open><NotepadIcon /></TaskButton>
      <TaskButton aria-label="Command Prompt" $open><CmdIcon /></TaskButton>
    </TaskGroup>
    <Tray>
      <TrayButton aria-label="People" $width={48}><PeopleIcon /></TrayButton>
      <TrayButton aria-label="Skype"><SkypeIcon /></TrayButton>
      <TrayButton aria-label="OneDrive"><CloudIcon /></TrayButton>
      <TrayButton aria-label="Sync"><SwirlIcon /></TrayButton>
      <TrayButton aria-label="Graphics"><PanelIcon /></TrayButton>
      <TrayButton aria-label="Security"><ShieldIcon /></TrayButton>
      <TrayButton aria-label="Network"><NetworkIcon /></TrayButton>
      <TrayButton aria-label="Volume"><VolumeIcon /></TrayButton>
      <Clock>{'5:17 PM\n1/7/2019'}</Clock>
      <TrayButton aria-label="Notifications" $width={40}><NoticeIcon /></TrayButton>
      <ShowDesktop aria-label="Show desktop" />
    </Tray>
  </Taskbar>
);

export default function App() {
  return (
    <Desktop>
      <GlobalStyle />
      <BrowserChrome />
      <Main>
        <Player>
          <DemoApp />
          <Caption>product list option displays the product</Caption>
          <Progress>
            <ProgressPart $kind="played" style={{ width: '21.5%' }} />
            <ProgressPart $kind="buffered" style={{ width: '40.1%' }} />
          </Progress>
        </Player>
        <CourseSidebar />
      </Main>
      <WindowsTaskbar />
    </Desktop>
  );
}
